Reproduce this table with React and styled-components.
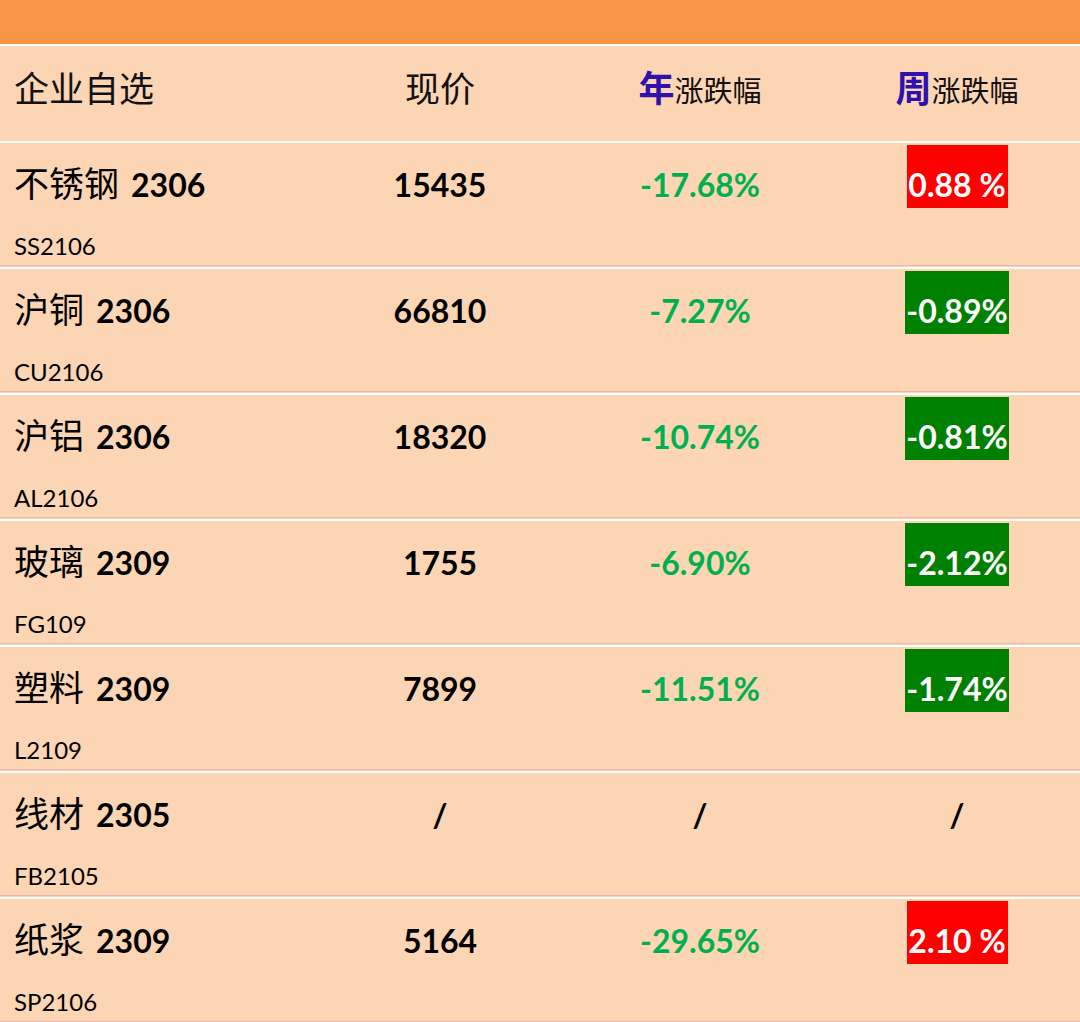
import React from "react";
import styled, { createGlobalStyle } from "styled-components";

const GlobalStyle = createGlobalStyle`
  html, body {
    margin: 0;
    padding: 0;
    background: #FCD5B4;
  }
  body {
    font-family: "Lato", "Noto Sans CJK SC", sans-serif;
    color: #000;
  }
`;

const COLS = "314px 252px 268px 246px";
const CJK = `"Noto Sans CJK SC", "Noto Sans CJK TC", sans-serif`;
const NUM = `"Lato", "Noto Sans CJK SC", sans-serif`;

const Page = styled.div`
  width: 1080px;
  height: 1022px;
  overflow: hidden;
  background: #FCD5B4;
`;

const TopBar = styled.div`
  height: 44px;
  background: #F79646;
  border-bottom: 2px solid #fff;
`;

const HeaderRow = styled.div`
  display: grid;
  grid-template-columns: ${COLS};
  height: 97px;
  border-bottom: 2px solid #fff;
  align-items: center;
  padding-bottom: 14px;
  box-sizing: border-box;
`;

const HeadCell = styled.div`
  display: flex;
  align-items: baseline;
  justify-content: ${(p) => (p.$left ? "flex-start" : "center")};
  padding-left: ${(p) => (p.$left ? "14px" : "0")};
  font-family: ${CJK};
  font-size: 35px;
  line-height: 1.2;
  font-weight: 400;
  color: #111;
`;

const Accent = styled.span`
  font-family: ${CJK};
  font-weight: 700;
  font-size: 36px;
  color: #2E12AE;
`;

const HeadSub = styled.span`
  font-family: ${CJK};
  font-size: 29px;
  font-weight: 400;
  color: #111;
`;

const Row = styled.div`
  display: grid;
  grid-template-columns: ${COLS};
  height: 122px;
  border-bottom: 1px solid #E6B7B4;
  margin-bottom: 1px;
  & + & {
    border-top: 2px solid #fff;
  }
`;

const NameCell = styled.div`
  display: flex;
  flex-direction: column;
  padding-left: 14px;
`;

const MainLine = styled.div`
  height: 65px;
  display: flex;
  align-items: flex-end;
  justify-content: ${(p) => (p.$left ? "flex-start" : "center")};
`;

const NameText = styled.div`
  margin-bottom: 4px;
  white-space: nowrap;
  line-height: 1.2;
`;

const NameCJK = styled.span`
  font-family: ${CJK};
  font-size: 35px;
  font-weight: 400;
`;

const NameNum = styled.span`
  margin-left: 12px;
  font-family: ${NUM};
  font-size: 32px;
  font-weight: 700;
`;

const Code = styled.div`
  margin-top: 24px;
  font-family: ${NUM};
  font-size: 24px;
  line-height: 1.2;
  font-weight: 400;
`;

const Value = styled.div`
  margin-bottom: 4px;
  font-family: ${NUM};
  font-size: 32px;
  line-height: 1.2;
  font-weight: 700;
  white-space: nowrap;
  color: ${(p) => p.$color || "#000"};
`;

const Badge = styled.div`
  height: 63px;
  width: ${(p) => (p.$up ? "101px" : "104px")};
  box-sizing: border-box;
  display: flex;
  align-items: flex-end;
  justify-content: center;
  padding-bottom: 4px;
  background: ${(p) => (p.$up ? "#FF0000" : "#008000")};
  color: #fff;
  font-family: ${NUM};
  font-size: 32px;
  line-height: 1.2;
  font-weight: 700;
  white-space: nowrap;
`;

const rows = [
  { name: "不锈钢", month: "2306", code: "SS2106", price: "15435", year: "-17.68%", week: "0.88 %", up: true },
  { name: "沪铜", month: "2306", code: "CU2106", price: "66810", year: "-7.27%", week: "-0.89%", up: false },
  { name: "沪铝", month: "2306", code: "AL2106", price: "18320", year: "-10.74%", week: "-0.81%", up: false },
  { name: "玻璃", month: "2309", code: "FG109", price: "1755", year: "-6.90%", week: "-2.12%", up: false },
  { name: "塑料", month: "2309", code: "L2109", price: "7899", year: "-11.51%", week: "-1.74%", up: false },
  { name: "线材", month: "2305", code: "FB2105", price: "/", year: "/", week: "/", up: null },
  { name: "纸浆", month: "2309", code: "SP2106", price: "5164", year: "-29.65%", week: "2.10 %", up: true },
];

export default function App() {
  return (
    <>
      <GlobalStyle />
      <Page>
        <TopBar />
        <HeaderRow>
          <HeadCell $left>企业自选</HeadCell>
          <HeadCell>现价</HeadCell>
          <HeadCell>
            <Accent>年</Accent>
            <HeadSub>涨跌幅</HeadSub>
          </HeadCell>
          <HeadCell>
            <Accent>周</Accent>
            <HeadSub>涨跌幅</HeadSub>
          </HeadCell>
        </HeaderRow>
        {rows.map((r) => (
          <Row key={r.code}>
            <NameCell>
              <MainLine $left>
                <NameText>
                  <NameCJK>{r.name}</NameCJK>
                  <NameNum>{r.month}</NameNum>
                </NameText>
              </MainLine>
              <Code>{r.code}</Code>
            </NameCell>
            <MainLine>
              <Value>{r.price}</Value>
            </MainLine>
            <MainLine>
              <Value $color={r.year === "/" ? "#000" : "#00B050"}>{r.year}</Value>
            </MainLine>
            <MainLine>
              {r.up === null ? (
                <Value>{r.week}</Value>
              ) : (
                <Badge $up={r.up}>{r.week}</Badge>
              )}
            </MainLine>
          </Row>
        ))}
      </Page>
    </>
  );
}
